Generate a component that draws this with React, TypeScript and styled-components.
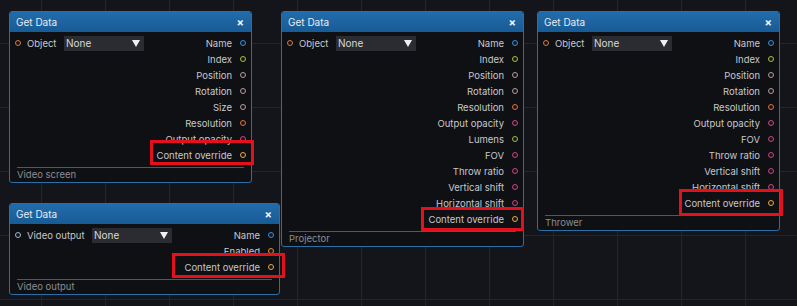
import React from "react";
import styled, { createGlobalStyle } from "styled-components";

const GlobalStyle = createGlobalStyle`
  html, body {
    margin: 0;
    padding: 0;
    background: #14151a;
  }
  body {
    font-family: Inter, "Noto Sans", "Liberation Sans", sans-serif;
  }
`;

const Canvas = styled.div`
  position: relative;
  width: 797px;
  height: 306px;
  overflow: hidden;
  background-color: #14151a;
  background-image:
    linear-gradient(to right, #23252b 1px, transparent 1px),
    linear-gradient(to bottom, #23252b 1px, transparent 1px);
  background-size: 64px 64px;
  background-position: 41px 43px;
`;

const NodeBox = styled.div<{ $x: number; $y: number; $w: number }>`
  position: absolute;
  left: ${(p) => p.$x}px;
  top: ${(p) => p.$y}px;
  width: ${(p) => p.$w}px;
  box-sizing: border-box;
  border: 1px solid #2b6fa9;
  border-radius: 3px;
  background: #0f1014;
  overflow: hidden;
  display: flex;
  flex-direction: column;
`;

const Header = styled.div`
  height: 20px;
  display: flex;
  align-items: center;
  justify-content: space-between;
  padding: 0 7px 0 6px;
  background: linear-gradient(to bottom, #226cab, #185b95);
  color: #e6edf5;
  font-size: 10px;
`;

const Close = styled.span`
  font-size: 11px;
  font-weight: 700;
  line-height: 1;
  color: #f2f5f8;
`;

const Body = styled.div`
  display: flex;
  justify-content: space-between;
  padding: 3px 0 4px;
`;

const Inputs = styled.div`
  display: flex;
  flex-direction: column;
`;

const Outputs = styled.div`
  display: flex;
  flex-direction: column;
  align-items: flex-end;
`;

const Row = styled.div`
  height: 16px;
  display: flex;
  align-items: center;
  font-size: 9.5px;
  color: #c6c8cd;
  white-space: nowrap;
`;

const InRow = styled(Row)`
  padding-left: 5px;
`;

const OutRow = styled(Row)`
  padding-right: 5px;
`;

const Pin = styled.span<{ $color: string }>`
  width: 4px;
  height: 4px;
  border-radius: 50%;
  border: 1.5px solid ${(p) => p.$color};
  background: #15161a;
  flex: none;
`;

const InLabel = styled.span<{ $w: number }>`
  width: ${(p) => p.$w}px;
  margin-left: 6px;
`;

const OutLabel = styled.span`
  margin-right: 8px;
`;

const Select = styled.div`
  width: 80px;
  height: 15px;
  box-sizing: border-box;
  display: flex;
  align-items: center;
  justify-content: space-between;
  padding: 0 4px 0 2px;
  background: #2a2c31;
  color: #d6d8dc;
  font-size: 10px;
`;

const Arrow = styled.span`
  width: 0;
  height: 0;
  border-left: 4px solid transparent;
  border-right: 4px solid transparent;
  border-top: 7px solid #f0f0f0;
`;

const Footer = styled.div`
  margin: 0 7px 0 7px;
  border-top: 1px solid #55575d;
  height: 15px;
  display: flex;
  align-items: center;
  font-size: 9.5px;
  color: #8b8d93;
  padding-bottom: 1px;
  box-sizing: border-box;
`;

const Highlight = styled.div<{ $x: number; $y: number; $w: number; $h: number }>`
  position: absolute;
  left: ${(p) => p.$x}px;
  top: ${(p) => p.$y}px;
  width: ${(p) => p.$w}px;
  height: ${(p) => p.$h}px;
  box-sizing: border-box;
  border: 3px solid #e3111b;
`;

const C = {
  name: "#3b8fd6",
  index: "#a6c43c",
  trans: "#b59a9c",
  res: "#e1703c",
  opacity: "#d3408c",
  content: "#e6a943",
  lumens: "#9bbf3f",
  proj: "#d3407f",
  object: "#d9783b",
  video: "#9ab6cf",
  enabled: "#e29130",
};

type Output = [string, string];

type NodeProps = {
  x: number;
  y: number;
  w: number;
  input: string;
  inputColor: string;
  labelW: number;
  outputs: Output[];
  footer: string;
};

const Node = ({ x, y, w, input, inputColor, labelW, outputs, footer }: NodeProps) => (
  <NodeBox $x={x} $y={y} $w={w}>
    <Header>
      <span>Get Data</span>
      <Close>×</Close>
    </Header>
    <Body>
      <Inputs>
        <InRow>
          <Pin $color={inputColor} />
          <InLabel $w={labelW}>{input}</InLabel>
          <Select>
            <span>None</span>
            <Arrow />
          </Select>
        </InRow>
      </Inputs>
      <Outputs>
        {outputs.map(([label, color]) => (
          <OutRow key={label}>
            <OutLabel>{label}</OutLabel>
            <Pin $color={color} />
          </OutRow>
        ))}
      </Outputs>
    </Body>
    <Footer>{footer}</Footer>
  </NodeBox>
);

const screenOutputs: Output[] = [
  ["Name", C.name],
  ["Index", C.index],
  ["Position", C.trans],
  ["Rotation", C.trans],
  ["Size", C.trans],
  ["Resolution", C.res],
  ["Output opacity", C.opacity],
  ["Content override", C.content],
];

const projectorOutputs: Output[] = [
  ["Name", C.name],
  ["Index", C.index],
  ["Position", C.trans],
  ["Rotation", C.trans],
  ["Resolution", C.res],
  ["Output opacity", C.opacity],
  ["Lumens", C.lumens],
  ["FOV", C.proj],
  ["Throw ratio", C.proj],
  ["Vertical shift", C.proj],
  ["Horizontal shift", C.proj],
  ["Content override", C.content],
];

const throwerOutputs: Output[] = projectorOutputs.filter(([l]) => l !== "Lumens");

const videoOutputs: Output[] = [
  ["Name", C.name],
  ["Enabled", C.enabled],
  ["Content override", C.content],
];

export default function App() {
  return (
    <>
      <GlobalStyle />
      <Canvas>
        <Node x={9} y={11} w={243} input="Object" inputColor={C.object} labelW={37} outputs={screenOutputs} footer="Video screen" />
        <Node x={9} y={203} w={271} input="Video output" inputColor={C.video} labelW={65} outputs={videoOutputs} footer="Video output" />
        <Node x={281} y={11} w={243} input="Object" inputColor={C.object} labelW={37} outputs={projectorOutputs} footer="Projector" />
        <Node x={537} y={11} w={243} input="Object" inputColor={C.object} labelW={37} outputs={throwerOutputs} footer="Thrower" />

        <Highlight $x={150} $y={140} $w={104} $h={25} />
        <Highlight $x={172} $y={253} $w={113} $h={25} />
        <Highlight $x={421} $y={207} $w={103} $h={24} />
        <Highlight $x={679} $y={189} $w={104} $h={27} />
      </Canvas>
    </>
  );
}
